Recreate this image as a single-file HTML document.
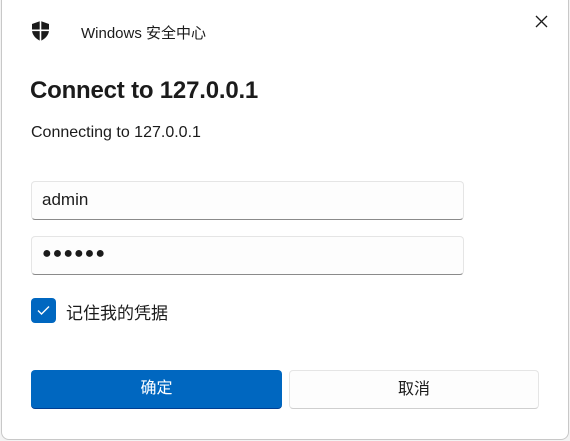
<!DOCTYPE html>
<html><head><meta charset="utf-8"><style>
*{margin:0;padding:0;box-sizing:border-box}
body{width:570px;height:441px;background:#f3f3f3;position:relative;overflow:hidden;font-family:"Segoe UI","Liberation Sans","Noto Sans CJK SC",sans-serif;color:#1b1b1b}
.win{position:absolute;left:1px;top:-8px;width:568px;height:448px;background:#fff;border:1px solid #c8c8c8;border-radius:8px}
.a{position:absolute}
.inp{position:absolute;left:31px;width:433px;height:39px;border:1px solid #e5e5e5;border-bottom:1px solid #8a8a8a;border-radius:4px;background:#fdfdfd}
.btn{position:absolute;top:370px;height:39px;border-radius:4px;font-size:16px;text-align:center;line-height:38px}
</style></head><body>
<div class="win"></div>
<svg class="a" style="left:31px;top:21px" width="19" height="20" viewBox="0 0 19 20"><path d="M9.5 0 L18 3 V9 C18 14 14 18 9.5 20 C5 18 1 14 1 9 V3 Z" fill="#1b1b1b"/><rect x="8.7" y="0" width="1.6" height="20" fill="#fff"/><rect x="0" y="8.5" width="19" height="1.6" fill="#fff"/></svg>
<div class="a" style="left:81px;top:22px;font-size:15px">Windows 安全中心</div>
<svg class="a" style="left:535px;top:15px" width="13" height="13" viewBox="0 0 13 13"><path d="M1 1L12 12M12 1L1 12" stroke="#1b1b1b" stroke-width="1.3"/></svg>
<div class="a" style="left:30px;top:77px;font-size:24px;font-weight:bold;letter-spacing:-0.2px">Connect to 127.0.0.1</div>
<div class="a" style="left:31px;top:124px;font-size:16px">Connecting to 127.0.0.1</div>
<div class="inp" style="top:181px"><span class="a" style="left:10px;top:8px;font-size:17px">admin</span></div>
<div class="inp" style="top:236px"><span class="a" style="left:10px;top:8px;font-size:16px;letter-spacing:1px">●●●●●●</span></div>
<div class="a" style="left:31px;top:298px;width:25px;height:25px;background:#0067c0;border-radius:4px"><svg width="25" height="25"><path d="M7 12.5L10.5 16L18 8.5" stroke="#fff" stroke-width="1.4" fill="none"/></svg></div>
<div class="a" style="left:66px;top:299px;font-size:17px">记住我的凭据</div>
<div class="btn" style="left:31px;width:251px;background:#0067c0;color:#fff;border-bottom:1px solid #003e92">确定</div>
<div class="btn" style="left:289px;width:250px;background:#fdfdfd;border:1px solid #e5e5e5;border-bottom-color:#cfcfcf">取消</div>
</body></html>
